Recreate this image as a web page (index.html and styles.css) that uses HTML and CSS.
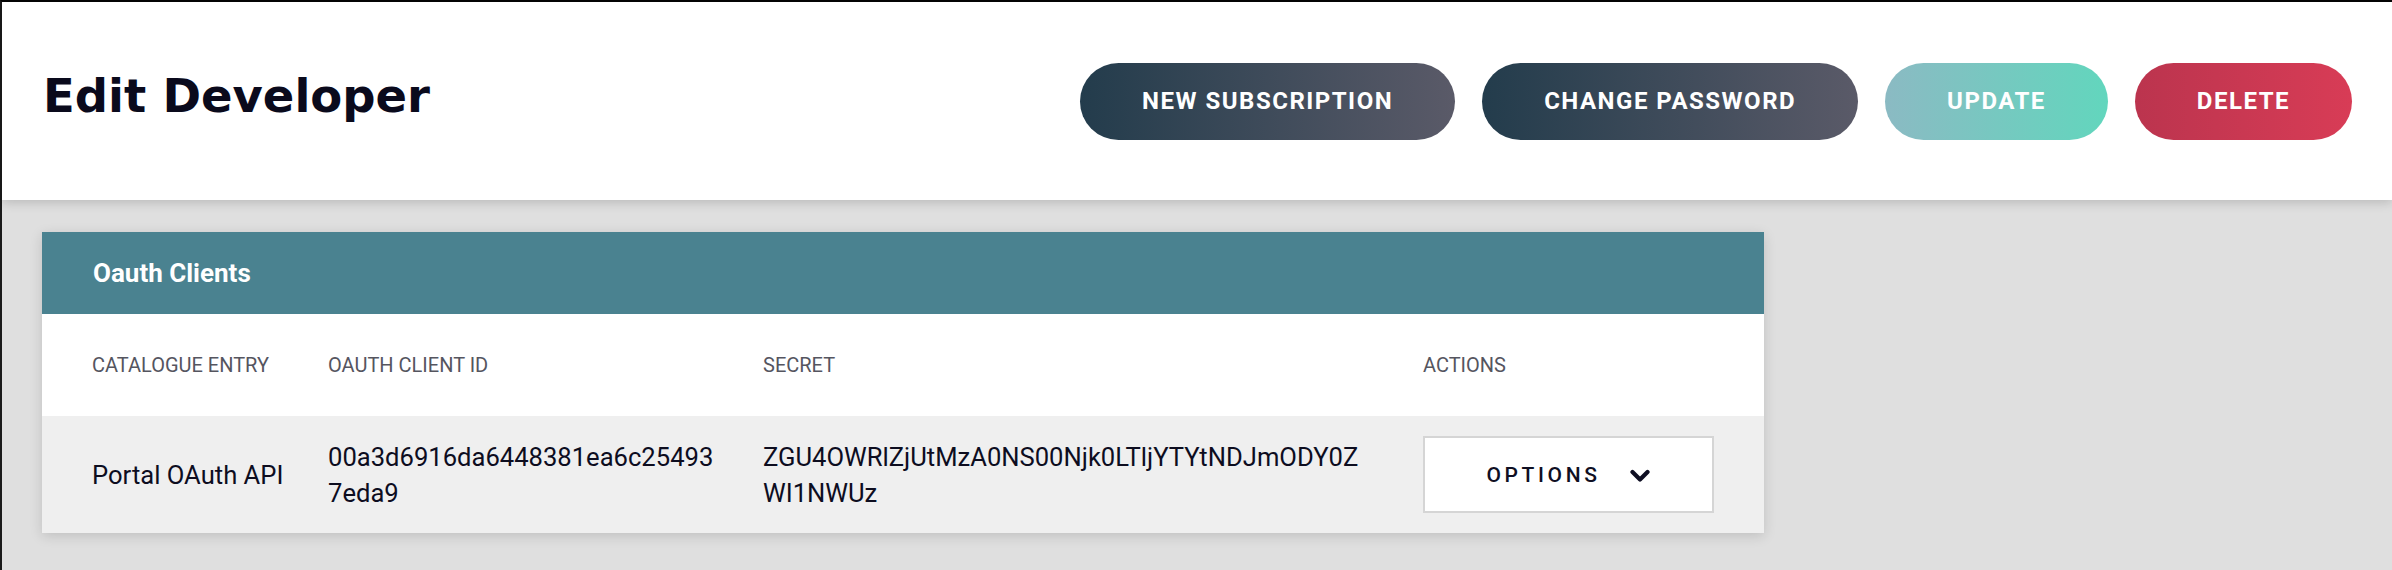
FILE: index.html
```html
<!DOCTYPE html>
<html lang="en">
<head>
<meta charset="utf-8">
<title>Edit Developer</title>
<link rel="stylesheet" href="styles.css">
</head>
<body>
<div class="frame">
  <header class="topbar">
    <h1 class="title">Edit Developer</h1>
    <div class="actions">
      <button class="btn btn-dark">New Subscription</button>
      <button class="btn btn-dark">Change Password</button>
      <button class="btn btn-update">Update</button>
      <button class="btn btn-delete">Delete</button>
    </div>
  </header>
  <main class="content">
    <section class="card">
      <div class="card-head">Oauth Clients</div>
      <table class="clients">
        <colgroup>
          <col class="c1"><col class="c2"><col class="c3"><col class="c4">
        </colgroup>
        <thead>
          <tr>
            <th>Catalogue Entry</th>
            <th>Oauth Client ID</th>
            <th>Secret</th>
            <th>Actions</th>
          </tr>
        </thead>
        <tbody>
          <tr>
            <td>Portal OAuth API</td>
            <td class="mono">00a3d6916da6448381ea6c254937eda9</td>
            <td class="mono secret">ZGU4OWRlZjUtMzA0NS00Njk0LTljYTYtNDJmODY0ZWI1NWUz</td>
            <td>
              <button class="options">
                <span>Options</span>
                <svg class="chev" width="20" height="14" viewBox="0 0 20 14" aria-hidden="true">
                  <path d="M2.5 3 L10 10.5 L17.5 3" fill="none" stroke="#0f0f23" stroke-width="4.2" stroke-linecap="round" stroke-linejoin="round"/>
                </svg>
              </button>
            </td>
          </tr>
        </tbody>
      </table>
    </section>
  </main>
</div>
</body>
</html>
```
FILE: styles.css
```css
* { box-sizing: border-box; }

html, body {
  margin: 0;
  padding: 0;
  height: 100%;
}

body {
  font-family: Roboto, "Liberation Sans", Arial, sans-serif;
  background: #dfdfdf;
  color: #0d0d1f;
}

.frame {
  min-height: 100vh;
  background: #dfdfdf;
  border-top: 2px solid #050505;
  border-left: 2px solid #1a1a1a;
}

.topbar {
  position: relative;
  z-index: 1;
  height: 198px;
  background: #ffffff;
  display: flex;
  align-items: center;
  justify-content: space-between;
  padding: 0 40px 0 41px;
  box-shadow: 0 3px 10px rgba(0, 0, 0, 0.16);
}

.title {
  margin: 0;
  font-family: "DejaVu Sans", "Noto Sans", sans-serif;
  font-weight: 700;
  font-size: 46.5px;
  color: #0a0a1c;
  letter-spacing: 0;
  padding-bottom: 10px;
}

.actions {
  display: flex;
  gap: 27px;
  align-items: center;
}

.btn {
  height: 77px;
  border: 0;
  border-radius: 39px;
  padding: 0 62px;
  font-family: Roboto, "Liberation Sans", sans-serif;
  font-size: 24px;
  font-weight: 700;
  letter-spacing: 1.5px;
  text-transform: uppercase;
  color: #ffffff;
  cursor: pointer;
}

.btn-dark {
  background: linear-gradient(90deg, #233c4c 0%, #5a5a68 100%);
}

.btn-update {
  background: linear-gradient(90deg, #8bbac3 0%, #62d6bd 100%);
}

.btn-delete {
  background: linear-gradient(90deg, #bb344e 0%, #d83c56 100%);
}

.content {
  padding: 32px 0 40px 40px;
}

.card {
  width: 1722px;
  background: #ffffff;
  box-shadow: 0 3px 12px rgba(0, 0, 0, 0.14);
}

.card-head {
  height: 82px;
  background: #4a8290;
  color: #ffffff;
  font-size: 26px;
  font-weight: 700;
  display: flex;
  align-items: center;
  padding-left: 51px;
}

.clients {
  width: 100%;
  border-collapse: collapse;
  table-layout: fixed;
}

.c1 { width: 262px; }
.c2 { width: 435px; }
.c3 { width: 660px; }
.c4 { width: 365px; }

.clients th,
.clients td {
  padding: 0 16px 0 24px;
  text-align: left;
  vertical-align: middle;
}

.clients th:first-child,
.clients td:first-child {
  padding-left: 50px;
}

.clients th:last-child,
.clients td:last-child {
  padding-right: 50px;
}

.clients td.secret {
  padding-right: 28px;
}

.clients thead tr {
  height: 102px;
  background: #ffffff;
}

.clients th {
  font-size: 20px;
  font-weight: 400;
  text-transform: uppercase;
  color: #55555f;
}

.clients tbody tr {
  height: 117px;
  background: #efefef;
}

.clients td {
  font-size: 25.6px;
  line-height: 36px;
  color: #0d0d1f;
}

.clients td.mono {
  word-break: break-all;
}

.options {
  width: 100%;
  height: 77px;
  background: #ffffff;
  border: 2px solid #d5d5d5;
  display: flex;
  align-items: center;
  justify-content: center;
  gap: 30px;
  font-family: Roboto, "Liberation Sans", sans-serif;
  font-size: 21px;
  font-weight: 500;
  letter-spacing: 3.6px;
  text-transform: uppercase;
  color: #0f0f23;
  cursor: pointer;
  padding: 0;
}

.chev {
  display: block;
  margin-top: 2px;
}
```
